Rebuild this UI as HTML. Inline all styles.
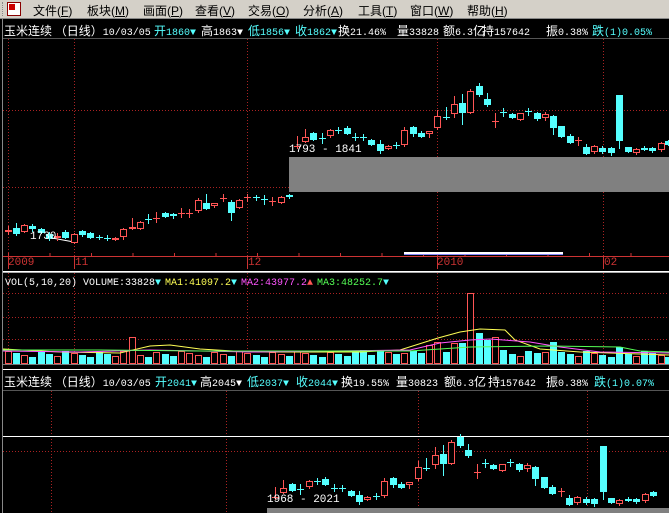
<!DOCTYPE html>
<html><head><meta charset="utf-8">
<style>
html,body{margin:0;padding:0;background:#000;width:669px;height:513px;overflow:hidden}
#menu{position:absolute;left:0;top:0;width:669px;height:18px;background:#d4d0c8;font:12px "Liberation Sans","Noto Sans CJK SC",sans-serif;color:#000}
#menu span{position:absolute;top:2px}
.t{position:absolute;font:10px "Liberation Mono","Noto Sans CJK SC",monospace;white-space:pre;line-height:14px}
.t b{font-weight:normal;font-size:12px;font-family:"Noto Sans CJK SC",sans-serif}
.w{color:#fff}.c{color:#5ff}.y{color:#ff5}.m{color:#f5f}.g{color:#5f5}
svg{position:absolute;left:0;top:0}
</style></head><body>
<div id="menu">
<div style="position:absolute;left:2px;top:2px;width:2px;height:14px;border-left:1px dotted #888"></div>
<div style="position:absolute;left:7px;top:2px;width:12px;height:12px;background:#fff;border:1px solid #800"><div style="width:6px;height:6px;background:#c00;margin:1px"></div></div>
<span style="left:33px">文件(<u>F</u>)</span><span style="left:87px">板块(<u>M</u>)</span><span style="left:143px">画面(<u>P</u>)</span><span style="left:195px">查看(<u>V</u>)</span><span style="left:248px">交易(<u>O</u>)</span><span style="left:303px">分析(<u>A</u>)</span><span style="left:358px">工具(<u>T</u>)</span><span style="left:410px">窗口(<u>W</u>)</span><span style="left:467px">帮助(<u>H</u>)</span>
</div>
<svg id="s" width="669" height="513" xmlns="http://www.w3.org/2000/svg"></svg>
<div class="t w" style="left:4px;top:24px"><b>玉米连续 （日线）</b>10/03/05</div>
<div class="t c" style="left:154px;top:24px"><b>开</b>1860▼</div>
<div class="t w" style="left:201px;top:24px"><b>高</b>1863▼</div>
<div class="t c" style="left:248px;top:24px"><b>低</b>1856▼</div>
<div class="t c" style="left:295px;top:24px"><b>收</b>1862▼</div>
<div class="t w" style="left:338px;top:24px"><b>换</b>21.46%</div>
<div class="t w" style="left:397px;top:24px"><b>量</b>33828</div>
<div class="t w" style="left:443px;top:24px"><b>额</b>6.3<b>亿</b></div>
<div class="t w" style="left:482px;top:24px"><b>持</b>157642</div>
<div class="t w" style="left:546px;top:24px"><b>振</b>0.38%</div>
<div class="t c" style="left:592px;top:24px"><b>跌</b>(1)0.05%</div>

<div class="t w" style="left:4px;top:375px"><b>玉米连续 （日线）</b>10/03/05</div>
<div class="t c" style="left:155px;top:375px"><b>开</b>2041▼</div>
<div class="t w" style="left:200px;top:375px"><b>高</b>2045▼</div>
<div class="t c" style="left:247px;top:375px"><b>低</b>2037▼</div>
<div class="t c" style="left:296px;top:375px"><b>收</b>2044▼</div>
<div class="t w" style="left:341px;top:375px"><b>换</b>19.55%</div>
<div class="t w" style="left:396px;top:375px"><b>量</b>30823</div>
<div class="t w" style="left:444px;top:375px"><b>额</b>6.3<b>亿</b></div>
<div class="t w" style="left:488px;top:375px"><b>持</b>157642</div>
<div class="t w" style="left:546px;top:375px"><b>振</b>0.38%</div>
<div class="t c" style="left:594px;top:375px"><b>跌</b>(1)0.07%</div>

<div class="t w" style="left:5px;top:277px">VOL(5,10,20) VOLUME:33828<span class="c">▼</span></div>
<div class="t y" style="left:165px;top:277px">MA1:41097.2<span class="c">▼</span></div>
<div class="t m" style="left:241px;top:277px">MA2:43977.2<span style="color:#f55">▲</span></div>
<div class="t g" style="left:317px;top:277px">MA3:48252.7<span class="c">▼</span></div>

<div class="t" style="left:8px;top:256px;color:#c33;font-size:11px">2009</div>
<div class="t" style="left:75px;top:256px;color:#c33;font-size:11px">11</div>
<div class="t" style="left:248px;top:256px;color:#c33;font-size:11px">12</div>
<div class="t" style="left:437px;top:256px;color:#c33;font-size:11px">2010</div>
<div class="t" style="left:604px;top:256px;color:#c33;font-size:11px">02</div>
<div class="t w" style="left:289px;top:143px;font-size:11px">1793 - 1841</div>
<div class="t w" style="left:30px;top:230px;font-size:11px">1730</div>
<div class="t w" style="left:267px;top:493px;font-size:11px">1968 - 2021</div>
<script>
var C=[[8,'r',226,230,231,234],[16,'c',223,228,233,235],[24,'r',224,225,231,232],[32,'c',224,226,228,231],[41,'c',228,229,232,233],[49,'c',232,234,238,240],[57,'r',233,236,237,240],[65,'c',230,232,237,238],[74,'r',233,234,242,243],[82,'c',230,231,234,236],[90,'c',232,233,237,238],[99,'c',235,237,237,239],[107,'c',235,238,238,240],[115,'r',237,238,239,240],[123,'r',228,229,236,239],[132,'r',218,227,228,229],[140,'r',221,222,228,229],[148,'c',214,219,219,223],[156,'r',212,218,218,222],[165,'c',212,213,216,217],[173,'c',213,214,215,218],[181,'r',208,213,213,217],[189,'r',209,213,213,217],[198,'r',198,200,210,212],[206,'c',194,203,208,209],[214,'r',203,203,205,207],[223,'r',194,198,198,201],[231,'c',200,202,212,220],[239,'r',199,200,207,208],[247,'r',194,197,197,201],[256,'c',195,197,197,200],[264,'c',195,199,199,204],[272,'r',197,201,201,205],[281,'r',196,197,202,203],[289,'c',194,195,196,198],
[297,'r',136,146,146,148],[305,'r',129,137,141,142],[313,'c',132,133,139,140],[322,'c',133,138,138,143],[330,'r',129,130,135,137],[338,'c',127,130,130,133],[347,'c',126,128,133,134],[355,'c',133,137,137,140],[363,'c',134,137,137,140],[371,'c',139,140,144,145],[380,'c',140,144,150,153],[388,'r',145,146,148,149],[396,'c',142,145,145,148],[404,'r',127,130,144,146],[413,'c',126,127,133,136],[421,'c',131,133,136,137],[429,'r',131,131,133,137],[437,'r',110,116,127,129],[446,'c',107,117,117,119],[454,'r',96,104,113,117],[462,'c',94,103,112,124],[470,'r',89,91,112,113],[479,'c',83,86,94,96],[487,'c',93,99,104,106],[495,'r',113,121,121,127],[503,'c',108,112,112,116],[512,'c',113,114,117,118],[520,'r',113,113,119,120],[528,'c',108,111,111,115],[537,'c',112,113,118,120],[545,'r',112,114,117,120],[553,'c',115,116,127,134],[561,'c',126,126,136,137],[570,'c',134,136,142,143],[578,'r',137,140,140,145],[586,'c',144,147,153,154],[594,'r',145,146,151,153],[602,'c',146,148,151,153],[611,'c',147,148,152,155],[619,'c',95,95,140,148],[628,'c',147,147,151,152],[636,'r',148,149,152,154],[644,'c',146,148,149,150],[652,'c',147,148,150,152],[661,'r',142,143,149,151],[668,'c',140,141,144,145]];
var V={15:337,56:293,57:333,58:340,59:337,52:342,54:343,55:343,51:345,66:342,65:352,60:350,45:350,48:353,43:350,74:347};
var o='';function L(x1,y1,x2,y2,c,d){o+='<line x1="'+x1+'" y1="'+y1+'" x2="'+x2+'" y2="'+y2+'" stroke="'+c+'"'+(d?' stroke-dasharray="1,2"':'')+'/>';}
function R(x,y,w,h,f,s){o+='<rect x="'+x+'" y="'+y+'" width="'+w+'" height="'+h+'" fill="'+f+'"'+(s?' stroke="'+s+'"':'')+'/>';}
L(2.5,18,2.5,513,'#888');L(0,18.5,669,18.5,'#888');L(3,38.5,669,38.5,'#555');
[8,74,247,437,603].forEach(function(x){L(x+.5,39,x+.5,256,'#a22',1);L(x+.5,273,x+.5,363,'#a22',1);});
[110,187].forEach(function(y){L(3,y+.5,669,y+.5,'#a22',1);});
[293,317,339].forEach(function(y){L(3,y+.5,669,y+.5,'#a22',1);});
R(289,157,380,35,'#808080');
L(3,256.5,669,256.5,'#c33');
for(var x=8;x<669;x+=41.5)L(x+.5,253,x+.5,256,'#c33');
[8,74,247,437,603].forEach(function(x){L(x+.5,256,x+.5,269,'#c33');});
R(404,252,159,2,'#fff');L(404,254.5,563,254.5,'#88f');
L(3,271.5,669,271.5,'#fff');L(3,272.5,669,272.5,'#aaa');
L(3,364.5,669,364.5,'#777');L(3,369.5,669,369.5,'#fff');
L(3,390.5,669,390.5,'#555');
[51,226,418,587].forEach(function(x){L(x+.5,391,x+.5,513,'#a22',1);});
L(3,451.5,669,451.5,'#a22',1);
L(3,436.5,669,436.5,'#fff');
R(267,508,402,5,'#808080');
L(52,238,74,242,'#fff');
function candle(x,c,h,t,b,l,dy){var col=c=='r'?'#f55':'#5ff';x=Math.round(x);
L(x+.5,h+dy,x+.5,l+dy+1,col);
if(b-t<1){L(x-3,t+dy+.5,x+4,t+dy+.5,col);}
else if(c=='r'){R(x-2.5,t+dy+.5,6,b-t,'#000',col);}
else R(x-3,t+dy,7,b-t+1,col);}
C.forEach(function(k,i){candle(k[0],k[1],k[2],k[3],k[4],k[5],0);
var top=V[i]||(351+((i*37)%7)),col=k[1]=='r'?'#f55':'#5ff';
if(k[1]=='r')R(k[0]-2.5,top+.5,6,363-top,'#000',col);else R(k[0]-3,top,7,364-top,col);
if(i>=35){var bx=275+(i-35)*8.4;candle(bx,k[1],k[2],k[3],k[4],k[5],351);}});
function P(pts,c){o+='<polyline fill="none" stroke="'+c+'" points="'+pts+'"/>';}
P('3,349 60,352 120,353 150,346 170,345 200,349 250,352 300,352 360,352 400,350 438,338 460,332 480,329 505,330 515,340 540,349 580,352 640,354 669,355','#ff5');
P('3,351 80,352 150,350 250,352 330,351 410,350 440,343 470,340 490,339 530,342 560,347 600,352 669,353','#f5f');
P('3,350 100,350 200,351 330,351 410,351 470,347 550,346 620,347 640,351 669,352','#5f5');
document.getElementById('s').innerHTML=o;
</script>
</body></html>
